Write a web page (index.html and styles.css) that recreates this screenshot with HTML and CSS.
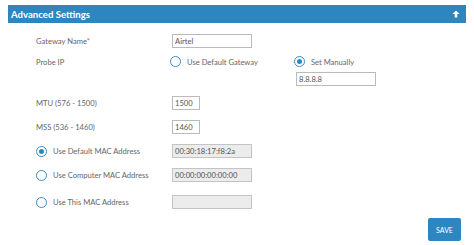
FILE: index.html
```html
<!DOCTYPE html>
<html lang="en">
<head>
    <meta charset="UTF-8">
    <title>Advanced Settings</title>
    <link rel="stylesheet" href="styles.css">
</head>
<body>
    <div class="panel">
        <div class="panel-head">
            <span>Advanced Settings</span>
            <svg class="arrow" width="8" height="8" viewBox="0 0 8 8"><path d="M4 0.5 L7.5 4 L5.3 4 L5.3 7.5 L2.7 7.5 L2.7 4 L0.5 4 Z" fill="#fff"/></svg>
        </div>
        <div class="form">
            <div class="row r-gw">
                <label class="lbl">Gateway Name<span class="req">*</span></label>
                <input class="field wide" type="text" value="Airtel">
            </div>
            <div class="row r-probe">
                <label class="lbl">Probe IP</label>
                <div class="opt"><span class="radio"></span>Use Default Gateway</div>
                <div class="opt manual"><span class="radio on"></span>Set Manually</div>
            </div>
            <div class="row r-ip">
                <input class="field wide ip" type="text" value="8.8.8.8">
            </div>
            <div class="row r-mtu">
                <label class="lbl">MTU (576 - 1500)</label>
                <input class="field small" type="text" value="1500">
            </div>
            <div class="row r-mss">
                <label class="lbl">MSS (536 - 1460)</label>
                <input class="field small" type="text" value="1460">
            </div>
            <div class="row r-mac1">
                <div class="opt lbl"><span class="radio on"></span>Use Default MAC Address</div>
                <input class="field wide dis" type="text" value="00:30:18:17:f8:2a" disabled>
            </div>
            <div class="row r-mac2">
                <div class="opt lbl"><span class="radio"></span>Use Computer MAC Address</div>
                <input class="field wide dis" type="text" value="00:00:00:00:00:00" disabled>
            </div>
            <div class="row r-mac3">
                <div class="opt lbl"><span class="radio"></span>Use This MAC Address</div>
                <input class="field wide dis" type="text" value="" disabled>
            </div>
        </div>
        <div class="actions">
            <button class="btn">SAVE</button>
        </div>
    </div>
</body>
</html>
```

FILE: styles.css
```css
body {
    margin: 0;
    background-color: #fff;
    font-family: Lato, "Open Sans", sans-serif;
    color: #666;
}
.panel {
    padding: 5px 8px 0 8px;
}
.panel-head {
    height: 18px;
    background-color: #2e86c1;
    color: #fff;
    font-weight: bold;
    font-size: 9.6px;
    display: flex;
    align-items: center;
    justify-content: space-between;
    padding: 0 6px 0 3px;
}
.form {
    padding-left: 28px;
    font-size: 7.6px;
}
.row {
    display: flex;
    align-items: center;
}
.lbl {
    width: 136px;
    flex-shrink: 0;
}
.req {
    color: #d9534f;
}
.field {
    box-sizing: border-box;
    height: 14px;
    border: 1px solid #bbb;
    font-family: Lato, sans-serif;
    font-size: 7.6px;
    color: #555;
    padding: 0 2px;
    background: #fff;
}
.wide {
    width: 80px;
}
.small {
    width: 28px;
}
.dis {
    background: #ececec;
    border-color: #c4c4c4;
}
.opt {
    display: flex;
    align-items: center;
}
.manual {
    margin-left: 36px;
}
.radio {
    box-sizing: border-box;
    width: 11px;
    height: 11px;
    border: 1px solid #3a8cc7;
    border-radius: 50%;
    margin-right: 6px;
    display: inline-block;
    position: relative;
}
.radio.on::after {
    content: "";
    position: absolute;
    left: 2px;
    top: 2px;
    width: 5px;
    height: 5px;
    border-radius: 50%;
    background: #2e86c1;
}
.r-probe .opt:first-of-type {
    margin-left: -2px;
}
.r-gw { margin-top: 11px; }
.r-probe { margin-top: 8px; }
.r-ip { margin-top: 5px; padding-left: 260px; }
.r-mtu { margin-top: 10px; }
.r-mss { margin-top: 10px; }
.r-mac1 { margin-top: 10px; }
.r-mac2 { margin-top: 10px; }
.r-mac3 { margin-top: 13px; }
.actions {
    display: flex;
    justify-content: flex-end;
    padding-right: 5px;
    margin-top: 9px;
}
.btn {
    width: 33px;
    height: 23px;
    background-color: #2e86c1;
    color: #fff;
    border: none;
    border-radius: 2px;
    font-family: Lato, sans-serif;
    font-size: 7px;
    padding: 0;
}
```
